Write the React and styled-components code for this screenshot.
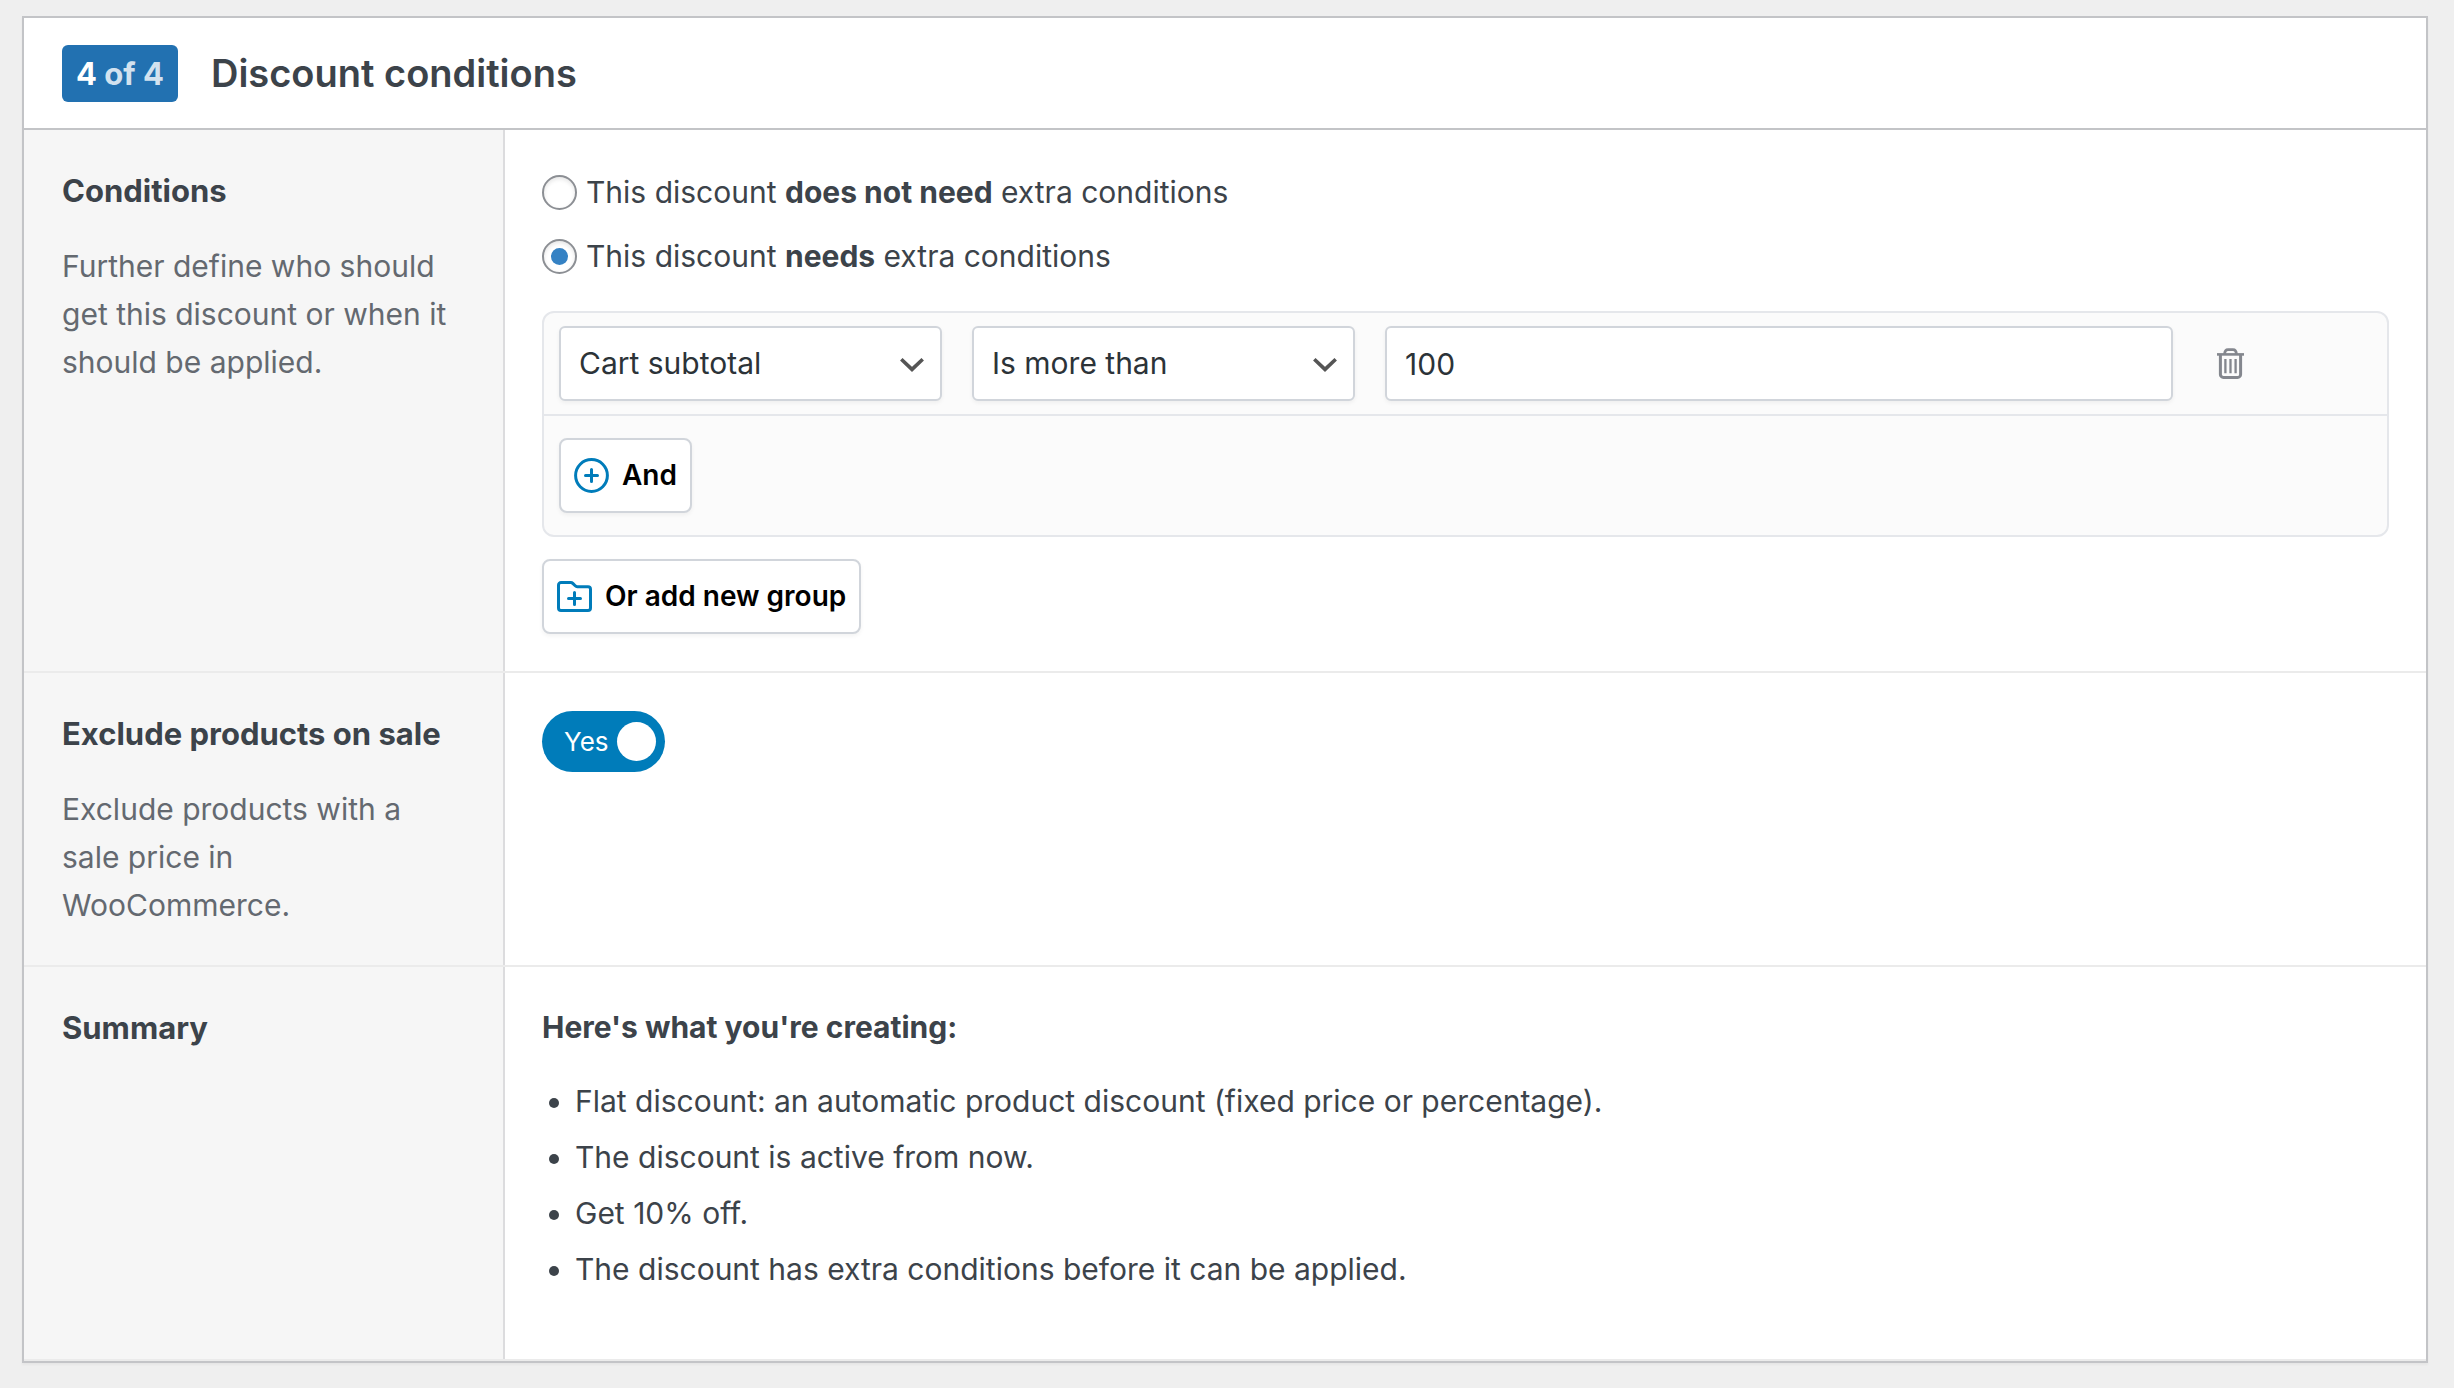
import { useState } from 'react';
import styled, { createGlobalStyle } from 'styled-components';

const summary = [
    'Flat discount: an automatic product discount (fixed price or percentage).',
    'The discount is active from now.',
    'Get 10% off.',
    'The discount has extra conditions before it can be applied.',
];

const ChevronIcon = () => (
    <svg width='24' height='14' viewBox='0 0 24 14' fill='none' stroke='#555' strokeWidth='3.6' aria-hidden='true'>
        <path d='M1.3 1.3 12 11.4 22.7 1.3' />
    </svg>
)

const TrashIcon = () => (
    <svg width='27' height='31' viewBox='0 0 27 31' fill='none' stroke='#84878e' aria-hidden='true'>
        <path d='M0 6.4H27' strokeWidth='2.6' />
        <path d='M7.6 6.2C7.8 3 9.3 1.7 11 1.7H16C17.7 1.7 19.2 3 19.4 6.2' strokeWidth='2.8' />
        <path d='M3.4 6.4V26.4A3 3 0 0 0 6.4 29.4H20.6A3 3 0 0 0 23.6 26.4V6.4' strokeWidth='3' />
        <path d='M8.4 11V25.2M13.5 11V25.2M18.6 11V25.2' strokeWidth='2.3' />
    </svg>
)

const PlusCircleIcon = () => (
    <svg width='35' height='35' viewBox='0 0 35 35' fill='none' stroke='#007cba' strokeWidth='3' strokeLinecap='round' aria-hidden='true'>
        <circle cx='17.5' cy='17.5' r='15.9' />
        <path d='M17.5 11.5V23.5M11.5 17.5H23.5' />
    </svg>
)

const FolderPlusIcon = () => (
    <svg width='35' height='31' viewBox='0 0 35 31' fill='none' stroke='#007cba' strokeWidth='3' strokeLinecap='round' strokeLinejoin='round' aria-hidden='true'>
        <path d='M1.5 4A2.5 2.5 0 0 1 4 1.5H13.6A3 3 0 0 1 15.8 2.4L18.2 4.8A3 3 0 0 0 20.4 5.7H31A2.5 2.5 0 0 1 33.5 8.2V27A2.5 2.5 0 0 1 31 29.5H4A2.5 2.5 0 0 1 1.5 27Z' />
        <path d='M17.5 11.5V23.5M11.5 17.5H23.5' />
    </svg>
)

const SelectBox = ({ label, options }) => (
    <SelectWrap>
        <Select aria-label={label}>
            {options.map((option) => <option key={option}>{option}</option>)}
        </Select>
        <ChevronIcon />
    </SelectWrap>
)

const App = () => {
    const [needs, setNeeds] = useState(true);
    const [exclude, setExclude] = useState(true);
    const [amount, setAmount] = useState('100');

    return (<>
        <GlobalStyle />
        <Card>
            <Header>
                <Step>4 <span>of 4</span></Step>
                <Title>Discount conditions</Title>
            </Header>
            <Row>
                <Side>
                    <SideTitle>Conditions</SideTitle>
                    <SideText>Further define who should get this discount or when it should be applied.</SideText>
                </Side>
                <Content>
                    <Radios>
                        <RadioLabel>
                            <Radio name='conditions' checked={!needs} onChange={() => setNeeds(false)} />
                            <span>This discount <b>does not need</b> extra conditions</span>
                        </RadioLabel>
                        <RadioLabel>
                            <Radio name='conditions' checked={needs} onChange={() => setNeeds(true)} />
                            <span>This discount <b>needs</b> extra conditions</span>
                        </RadioLabel>
                    </Radios>
                    <Group>
                        <Condition>
                            <SelectBox label='Condition' options={['Cart subtotal']} />
                            <SelectBox label='Comparison' options={['Is more than']} />
                            <Input aria-label='Value' value={amount} onChange={(e) => setAmount(e.target.value)} />
                            <DeleteButton type='button' aria-label='Delete'><TrashIcon /></DeleteButton>
                        </Condition>
                        <GroupFooter>
                            <Button type='button'><PlusCircleIcon />And</Button>
                        </GroupFooter>
                    </Group>
                    <Button type='button'><FolderPlusIcon />Or add new group</Button>
                </Content>
            </Row>
            <Row>
                <Side>
                    <SideTitle id='exclude'>Exclude products on sale</SideTitle>
                    <SideText>Exclude products with a sale price in WooCommerce.</SideText>
                </Side>
                <Content>
                    <Toggle $on={exclude}>
                        <input
                            type='checkbox'
                            role='switch'
                            aria-labelledby='exclude'
                            checked={exclude}
                            onChange={() => setExclude(!exclude)}
                        />
                        <span>{exclude ? 'Yes' : 'No'}</span>
                        <Knob />
                    </Toggle>
                </Content>
            </Row>
            <Row>
                <Side>
                    <SideTitle>Summary</SideTitle>
                </Side>
                <Content>
                    <SummaryTitle>Here's what you're creating:</SummaryTitle>
                    <SummaryList>
                        {summary.map((text) => <li key={text}>{text}</li>)}
                    </SummaryList>
                </Content>
            </Row>
        </Card>
    </>)
}

const GlobalStyle = createGlobalStyle`
    * {
        box-sizing: border-box;
    }
    body {
        margin: 0;
        background-color: #efefef;
        color: #3c434a;
        font-family: Inter, "Liberation Sans", sans-serif;
        font-size: 30px;
        line-height: 47px;
    }
    b {
        font-weight: 700;
    }
    svg {
        display: block;
        flex: none;
    }
`

const Card = styled.main`
    margin: 16px 26px 24px 22px;
    background-color: #fff;
    border: 2px solid #c3c4c7;
    box-shadow: 0 2px 2px rgba(0, 0, 0, 0.04);
`

const Header = styled.header`
    display: flex;
    align-items: center;
    gap: 33px;
    padding: 27px 38px 26px;
    border-bottom: 2px solid #c3c4c7;
`

const Step = styled.span`
    padding: 5px 14px;
    border-radius: 6px;
    background-color: #2271b1;
    color: #fff;
    font-size: 31px;
    font-weight: 700;
    span {
        opacity: 0.8;
    }
`

const Title = styled.h2`
    margin: 0;
    font-size: 38px;
    font-weight: 600;
`

const Row = styled.section`
    display: grid;
    grid-template-columns: 481px minmax(0, 1fr);
    border-bottom: 2px solid #ebebeb;
`

const Side = styled.div`
    padding: 37px 38px 36px;
    background-color: #f6f6f6;
    border-right: 2px solid #dcdcde;
`

const SideTitle = styled.h3`
    margin: 0;
    font-size: 31px;
    font-weight: 700;
`

const SideText = styled.p`
    margin: 28px 0 0;
    color: #646970;
    line-height: 48px;
`

const Content = styled.div`
    padding: 38px 37px 37px;
`

const Radios = styled.div`
    display: grid;
    gap: 16px;
    justify-items: start;
`

const RadioLabel = styled.label`
    display: flex;
    align-items: center;
    gap: 9px;
    line-height: 48px;
`

const Radio = styled.input.attrs({ type: 'radio' })`
    appearance: none;
    display: grid;
    place-items: center;
    width: 35px;
    height: 35px;
    margin: 0;
    border: 2px solid #8c8f94;
    border-radius: 50%;
    background-color: #fff;
    box-shadow: inset 0 2px 4px rgba(0, 0, 0, 0.1);
    &:checked::before {
        content: '';
        width: 17px;
        height: 17px;
        border-radius: 50%;
        background-color: #3582c4;
    }
`

const Group = styled.div`
    margin: 31px 0 22px;
    border: 2px solid #e5e7eb;
    border-radius: 12px;
    background-color: #fbfbfb;
`

const Condition = styled.div`
    display: grid;
    grid-template-columns: 383px 383px minmax(0, 1fr) 169px;
    gap: 30px;
    padding: 13px 15px;
    border-bottom: 2px solid #e5e7eb;
`

const SelectWrap = styled.div`
    position: relative;
    svg {
        position: absolute;
        top: 32px;
        right: 18px;
        pointer-events: none;
    }
`

const Select = styled.select`
    appearance: none;
    width: 100%;
    height: 75px;
    padding: 0 60px 0 18px;
    border: 2px solid #d1d5db;
    border-radius: 6px;
    background-color: #fff;
    box-shadow: 0 2px 4px rgba(0, 0, 0, 0.05);
    color: #2c3338;
    font: inherit;
`

const Input = styled.input`
    width: 100%;
    height: 75px;
    padding: 0 18px;
    border: 2px solid #d1d5db;
    border-radius: 6px;
    background-color: #fff;
    box-shadow: 0 2px 4px rgba(0, 0, 0, 0.05);
    color: #2c3338;
    font: inherit;
`

const DeleteButton = styled.button`
    justify-self: start;
    align-self: center;
    padding: 14px;
    border: 0;
    background: none;
    cursor: pointer;
`

const GroupFooter = styled.div`
    padding: 22px 15px;
`

const Button = styled.button`
    display: flex;
    align-items: center;
    gap: 13px;
    height: 75px;
    padding: 0 13px;
    border: 2px solid #d1d5db;
    border-radius: 8px;
    background-color: #fff;
    box-shadow: 0 2px 4px rgba(0, 0, 0, 0.05);
    color: #000;
    font: inherit;
    font-size: 28px;
    font-weight: 600;
    cursor: pointer;
`

const Toggle = styled.label`
    position: relative;
    display: inline-flex;
    flex-direction: ${({ $on }) => ($on ? 'row' : 'row-reverse')};
    align-items: center;
    gap: 8px;
    height: 61px;
    padding: 0 ${({ $on }) => ($on ? '9px 0 22px' : '22px 0 9px')};
    border-radius: 31px;
    background-color: ${({ $on }) => ($on ? '#007cba' : '#8c8f94')};
    color: #fff;
    font-size: 26px;
    cursor: pointer;
    input {
        position: absolute;
        inset: 0;
        margin: 0;
        opacity: 0;
    }
`

const Knob = styled.i`
    width: 39px;
    height: 39px;
    border-radius: 50%;
    background-color: #fff;
`

const SummaryTitle = styled.h4`
    margin: 0;
    font-size: 30px;
    font-weight: 700;
    line-height: 45px;
`

const SummaryList = styled.ul`
    display: grid;
    gap: 9px;
    margin: 28px 0 29px;
    padding-left: 33px;
`

export default App;
